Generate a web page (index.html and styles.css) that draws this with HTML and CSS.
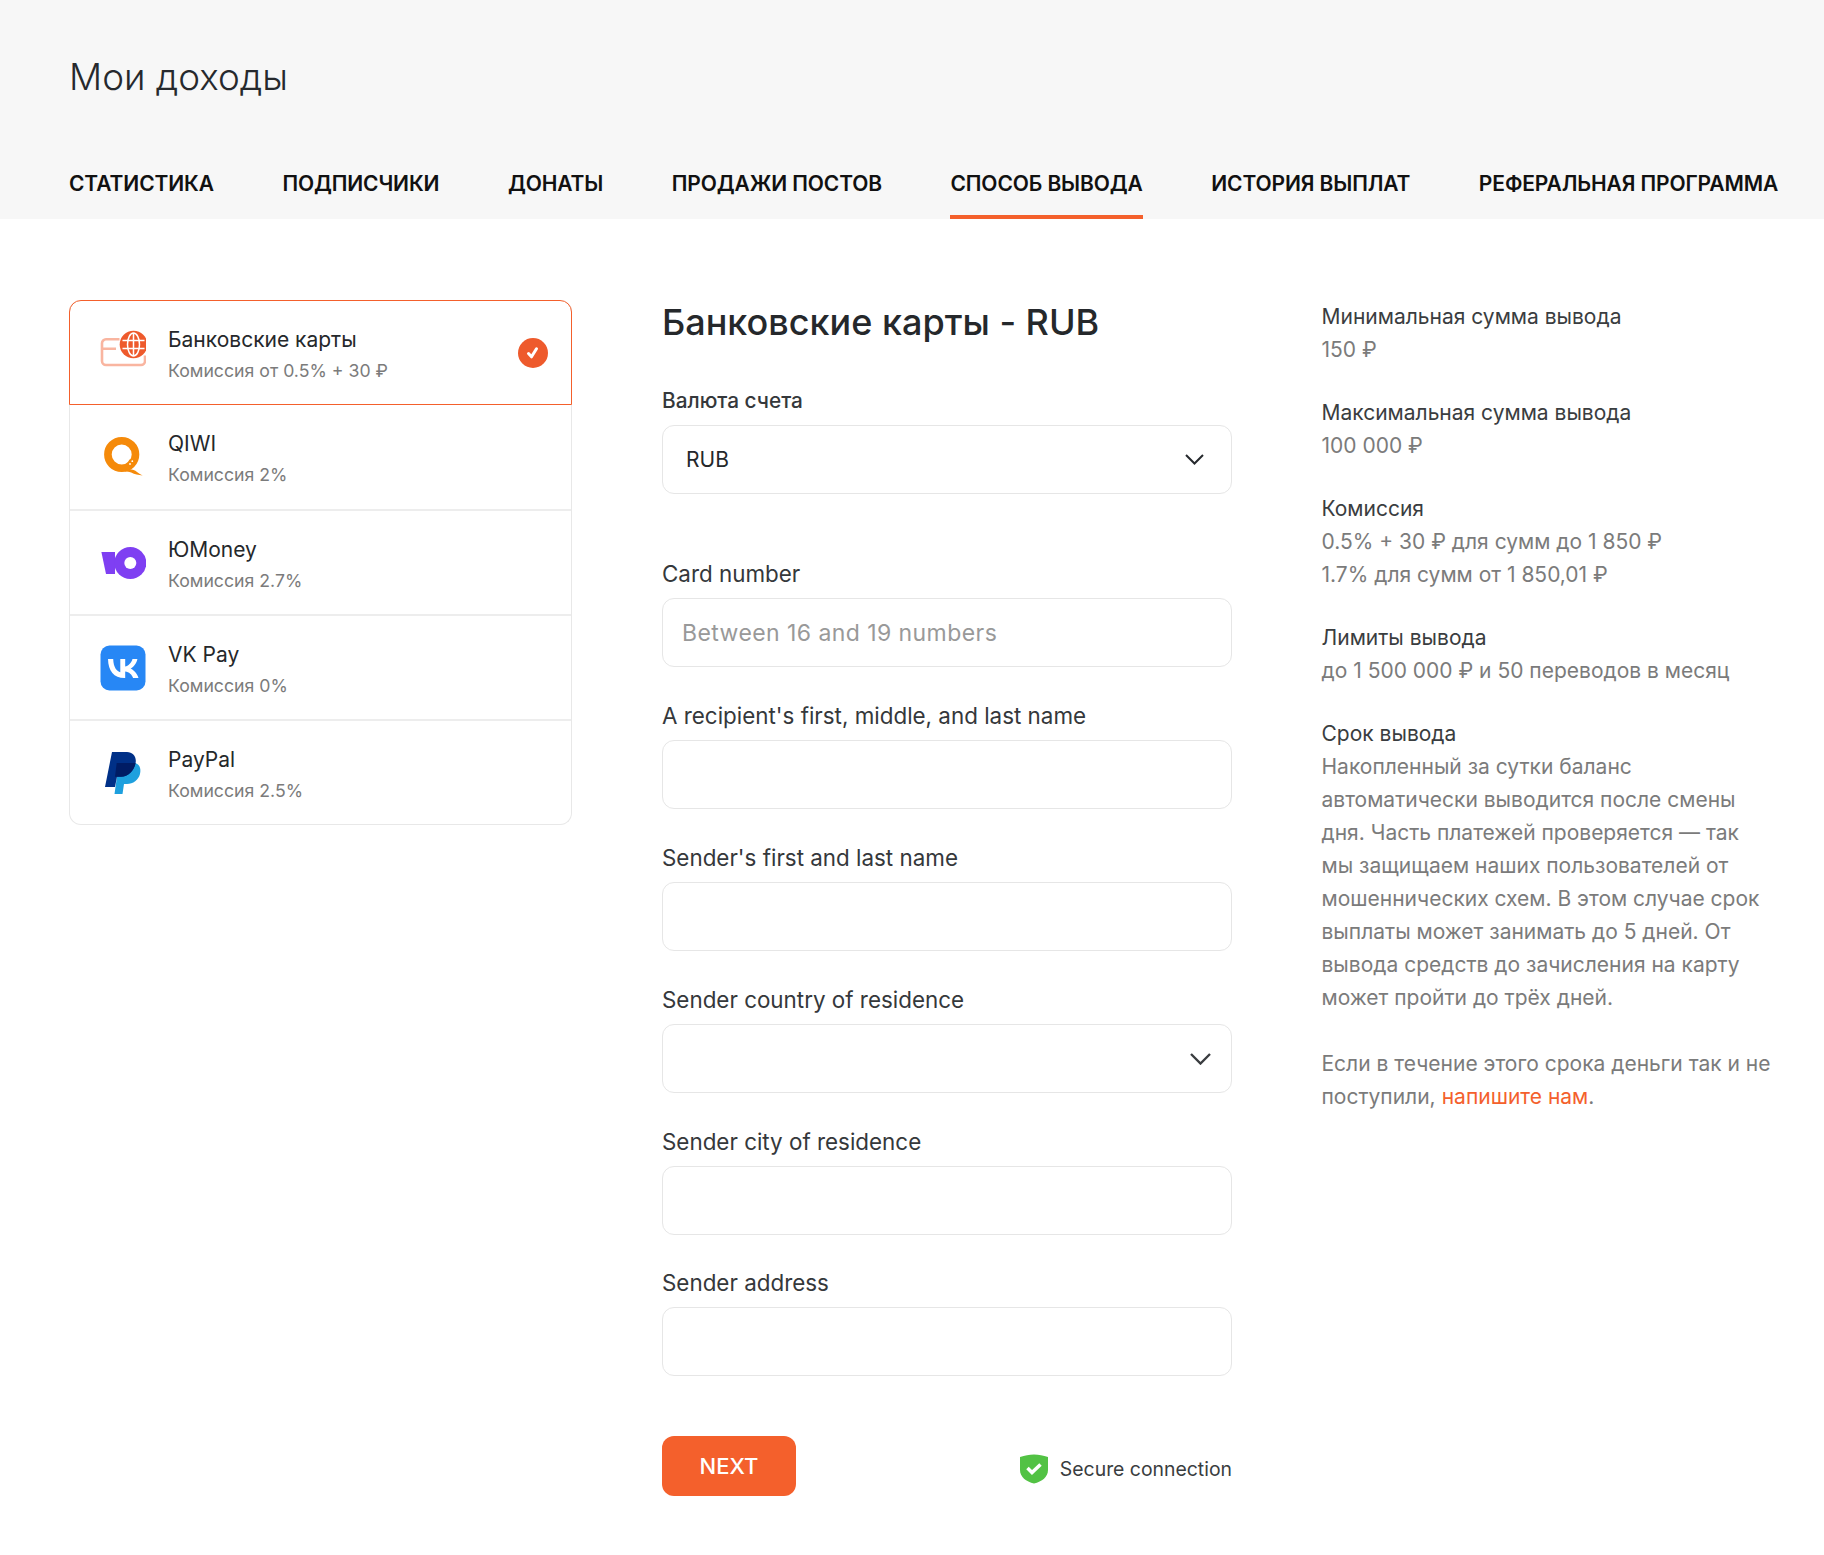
FILE: index.html
```html
<!DOCTYPE html>
<html lang="ru">
<head>
<meta charset="utf-8">
<title>Мои доходы</title>
<link rel="stylesheet" href="styles.css">
</head>
<body>
<header class="top">
  <h1 class="page-title">Мои доходы</h1>
  <nav class="tabs">
    <a class="tab">СТАТИСТИКА</a>
    <a class="tab">ПОДПИСЧИКИ</a>
    <a class="tab">ДОНАТЫ</a>
    <a class="tab">ПРОДАЖИ ПОСТОВ</a>
    <a class="tab tab-active">СПОСОБ ВЫВОДА</a>
    <a class="tab">ИСТОРИЯ ВЫПЛАТ</a>
    <a class="tab">РЕФЕРАЛЬНАЯ ПРОГРАММА</a>
  </nav>
</header>
<main class="content">
  <aside class="methods">
    <div class="method method-active">
      <svg class="method-icon" viewBox="0 0 46 46"><path d="M19.500 9.300H6a4 4 0 0 0-4 4V31a4 4 0 0 0 4 4H41a4 4 0 0 0 4-4V25.500M2 18.700H16" fill="none" stroke="#f9b5a0" stroke-width="2.600"/><circle cx="33.500" cy="14.500" r="13.800" fill="#ee5a2c"/><g fill="none" stroke="#fff" stroke-width="1.500"><ellipse cx="33.500" cy="14.500" rx="6" ry="11.500"/><path d="M33.500 3v23M22.500 10.500h22M22.500 18.500h22"/></g></svg>
      <div class="method-text"><div class="method-name">Банковские карты</div><div class="method-fee">Комиссия от 0.5% + 30 ₽</div></div>
      <svg class="method-check" viewBox="0 0 30 30"><circle cx="15" cy="15" r="15" fill="#ee5a2c"/><path d="M10.500 15.500l3 3.300 5-8" fill="none" stroke="#fff" stroke-width="3" stroke-linecap="round" stroke-linejoin="round"/></svg>
    </div>
    <div class="method">
      <svg class="method-icon" viewBox="0 0 46 46"><circle cx="21.700" cy="20.500" r="13.800" fill="none" stroke="#f58a0a" stroke-width="7.600"/><path d="M25 36c5-1.500 9-.5 12 2 2 1.500 3.700 2.700 5.700 3.500-4.500-.5-8-1.200-11.500-3-2.500-1-4-1-6-1z" fill="#f58a0a"/><path d="M29.500 25.500c2.500 0 4.500 1.500 5.500 3.500l-3 5-5.500-3.500z" fill="#f58a0a"/><circle cx="32.300" cy="27.200" r=".9" fill="#fff"/><circle cx="30" cy="30" r=".9" fill="#fff"/></svg>
      <div class="method-text"><div class="method-name">QIWI</div><div class="method-fee">Комиссия 2%</div></div>
    </div>
    <div class="method">
      <svg class="method-icon" viewBox="0 0 46 46"><path d="M1.400 12H15V34H6z" fill="#7f3ff2"/><circle cx="30.300" cy="23" r="16" fill="#7f3ff2"/><circle cx="30.300" cy="23" r="6" fill="#fff"/></svg>
      <div class="method-text"><div class="method-name">ЮMoney</div><div class="method-fee">Комиссия 2.7%</div></div>
    </div>
    <div class="method">
      <svg class="method-icon" viewBox="0 0 46 46"><rect x=".5" y=".5" width="45" height="45" rx="9" fill="#2787f5"/><path d="M24.400 33C14 33 8.200 26 8 14h5.200c.2 8.800 4 12.500 7.100 13.300V14h4.900v7.600c3-.3 6.200-3.800 7.300-7.600h4.900c-.8 4.700-4.300 8.200-6.800 9.600 2.500 1.200 6.400 4.200 7.900 9.400h-5.400c-1.100-3.500-4-6.200-7.900-6.600V33z" fill="#fff"/></svg>
      <div class="method-text"><div class="method-name">VK Pay</div><div class="method-fee">Комиссия 0%</div></div>
    </div>
    <div class="method">
      <svg class="method-icon" viewBox="0 0 46 46"><path d="M18 13h16c5 0 7.500 5 6 11-1.500 6-7 10-13 10h-3l-1.500 10h-8l1-7 2-14z" fill="#1ea0de"/><path d="M12 2h15c6 0 10 5 8.500 11.500C34 21 28 26.700 21 26.700h-4L15 37H5z" fill="#003087"/><path d="M16.700 13h18.800C34 21 28 26.700 21 26.700h-6z" fill="#001c64"/></svg>
      <div class="method-text"><div class="method-name">PayPal</div><div class="method-fee">Комиссия 2.5%</div></div>
    </div>
  </aside>

  <section class="form">
    <h2 class="form-title">Банковские карты - RUB</h2>
    <div class="field field-first">
      <div class="label label-small">Валюта счета</div>
      <div class="input select"><span>RUB</span><svg class="chevron" viewBox="0 0 19 11"><path d="M1 1l8.500 8.500L18 1" fill="none" stroke="#26292d" stroke-width="2"/></svg></div>
    </div>
    <div class="field field-card">
      <div class="label">Card number</div>
      <div class="input"><span class="placeholder">Between 16 and 19 numbers</span></div>
    </div>
    <div class="field">
      <div class="label">A recipient's first, middle, and last name</div>
      <div class="input"></div>
    </div>
    <div class="field">
      <div class="label">Sender's first and last name</div>
      <div class="input"></div>
    </div>
    <div class="field">
      <div class="label">Sender country of residence</div>
      <div class="input select select-plain"><svg class="chevron chevron-large" viewBox="0 0 21 12"><path d="M1 1l9.500 9.500L20 1" fill="none" stroke="#3a3d40" stroke-width="2.400"/></svg></div>
    </div>
    <div class="field">
      <div class="label">Sender city of residence</div>
      <div class="input"></div>
    </div>
    <div class="field field-last">
      <div class="label">Sender address</div>
      <div class="input"></div>
    </div>
    <div class="actions">
      <button class="next">NEXT</button>
      <div class="secure">
        <svg class="shield" viewBox="0 0 28 30"><path d="M0 3C5 1.500 9 .5 14 .5S23 1.500 28 3v13c0 7-6 11.500-14 13.500C6 27.500 0 23 0 16z" fill="#52c244"/><path d="M7.500 14l4.500 4.500 8.500-8" fill="none" stroke="#fff" stroke-width="3.500"/></svg>
        <span>Secure connection</span>
      </div>
    </div>
  </section>

  <aside class="info">
    <div class="info-block"><div class="info-head">Минимальная сумма вывода</div><div>150 ₽</div></div>
    <div class="info-block"><div class="info-head">Максимальная сумма вывода</div><div>100 000 ₽</div></div>
    <div class="info-block"><div class="info-head">Комиссия</div><div>0.5% + 30 ₽ для сумм до 1 850 ₽</div><div>1.7% для сумм от 1 850,01 ₽</div></div>
    <div class="info-block"><div class="info-head">Лимиты вывода</div><div>до 1 500 000 ₽ и 50 переводов в месяц</div></div>
    <div class="info-block"><div class="info-head">Срок вывода</div><div>Накопленный за сутки баланс автоматически выводится после смены дня. Часть платежей проверяется — так мы защищаем наших пользователей от мошеннических схем. В этом случае срок выплаты может занимать до 5 дней. От вывода средств до зачисления на карту может пройти до трёх дней.</div></div>
    <div class="info-block"><div>Если в течение этого срока деньги так и не</div><div class="info-line"><span>поступили,</span><a class="info-link">напишите нам</a><span>.</span></div></div>
  </aside>
</main>
</body>
</html>
```
FILE: styles.css
```css
* { box-sizing: border-box; }
html, body { margin: 0; padding: 0; }
body { font-family: Inter, "Noto Sans", sans-serif; background: #fff; color: #25282b; height: 1555px; overflow: hidden; }

.top { background: #f7f7f7; height: 219px; padding: 54px 0 0 69px; }
.page-title { margin: 0; font-size: 36.800px; line-height: 46px; font-weight: 300; color: #26292d; }
.tabs { display: flex; gap: 68.500px; margin-top: 55px; }
.tab { display: block; height: 64px; padding-top: 14.500px; font-size: 21px; line-height: 28px; font-weight: 600; letter-spacing: -.12px; color: #111; white-space: nowrap; }
.tab-active { border-bottom: 4px solid #f4602c; }

.content { display: flex; padding: 81px 0 0 69px; }
.methods { width: 503px; flex: none; height: 525px; border: 1px solid #e8e8e8; border-top: 0; border-radius: 12px; }
.method { display: flex; align-items: center; height: 105px; padding: 0 23px 0 30px; border-bottom: 2px solid #ededed; }
.method:last-child { border-bottom: 0; height: 104px; }
.method-active { height: 105px; margin: 0 -1px; border: 1px solid #f4602c; border-radius: 12px 12px 0 0; padding-left: 30px; }
.method-active + .method { height: 106px; }
.method-icon { width: 46px; height: 46px; flex: none; }
.method-text { margin: 3px 0 0 22px; flex: 1; }
.method-name { font-size: 21px; line-height: 28px; color: #25282b; }
.method-fee { font-size: 17.700px; line-height: 24px; margin-top: 5px; color: #7b7b7b; }
.method-check { width: 30px; height: 30px; flex: none; }

.form { width: 570px; flex: none; margin-left: 90px; }
.form-title { margin: 0; font-size: 36px; line-height: 44px; font-weight: 500; color: #25282b; }
.field { margin-top: 33.500px; }
.field-first { margin-top: 44px; }
.field-card { margin-top: 0; padding-top: 64.500px; }
.field-last { margin-top: 32.500px; }
.label { font-size: 22.400px; line-height: 30px; font-weight: 400; color: #35383b; margin-bottom: 9.500px; }
.label-small { font-size: 20.800px; line-height: 26px; font-weight: 500; margin-bottom: 11px; }
.input { display: flex; align-items: center; height: 69px; padding: 0 19px; border: 1px solid #e6e6e6; border-radius: 12px; font-size: 21px; background: #fff; }
.select { justify-content: space-between; padding: 0 27px 0 23px; }
.select-plain { justify-content: flex-end; padding-right: 20px; }
.chevron { width: 19px; height: 11px; }
.chevron-large { width: 21px; height: 12px; }
.placeholder { font-size: 23px; color: #999; letter-spacing: .43px; }

.actions { display: flex; justify-content: space-between; align-items: center; margin-top: 60px; }
.next { width: 134px; height: 60px; border: 0; border-radius: 12px; background: #f4602c; color: #fff; font: 500 22px Inter, sans-serif; }
.secure { display: flex; align-items: center; gap: 12px; font-size: 19.400px; color: #3a3d40; margin-top: 6px; }
.shield { width: 28px; height: 30px; }

.info { width: 452px; flex: none; margin-left: 89.500px; font-size: 21px; line-height: 33px; color: #7b7b7b; }
.info-block { margin-bottom: 30px; }
.info-block:last-child { margin-top: 33px; }
.info-head { color: #3a3d40; }
.info-line { display: flex; gap: 0; }
.info-line .info-link { margin-left: 6px; }
.info-link { color: #f4602c; }
```
